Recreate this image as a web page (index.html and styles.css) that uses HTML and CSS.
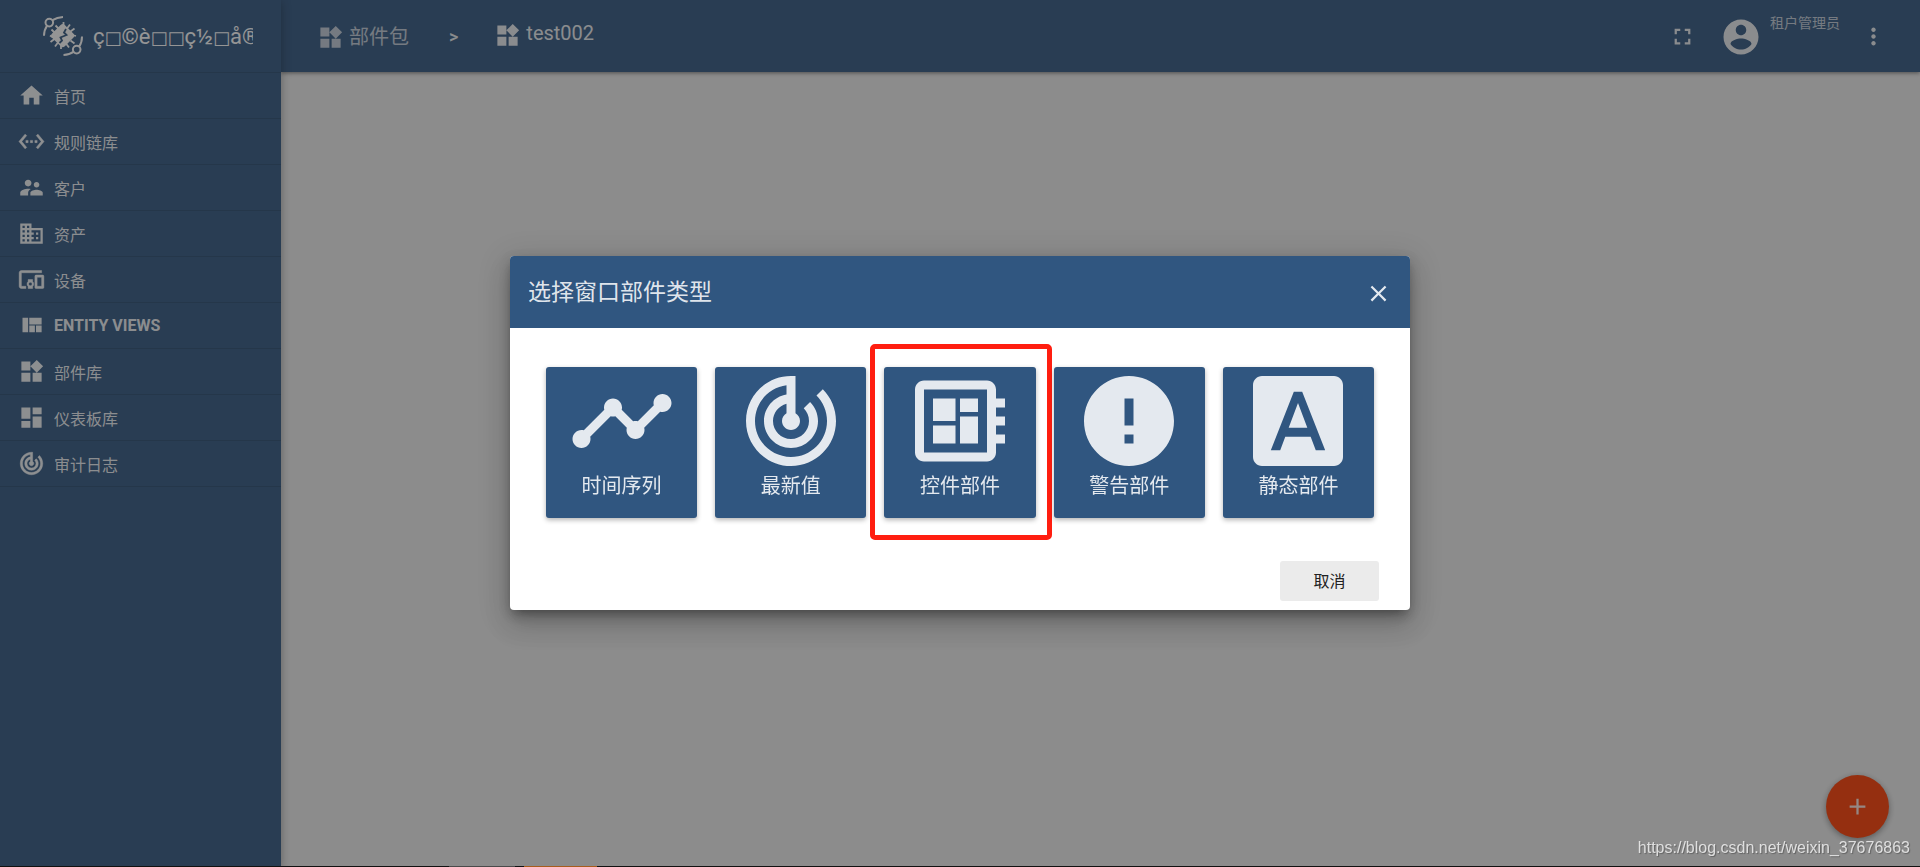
FILE: index.html
```html
<!DOCTYPE html>
<html lang="zh-CN">
<head>
<meta charset="utf-8">
<meta name="viewport" content="width=device-width, initial-scale=1">
<title>选择窗口部件类型</title>
<link rel="stylesheet" href="styles.css">
</head>
<body>
<svg class="sprite" aria-hidden="true">
  <symbol id="i-widgets" viewBox="0 0 24 24"><path d="M13 13v8h8v-8h-8zM3 21h8v-8H3v8zM3 3v8h8V3H3zm13.66-1.31L11 7.34 16.66 13l5.66-5.66-5.66-5.65z"/></symbol>
  <symbol id="i-track" viewBox="0 0 24 24"><path d="M19.07 4.93l-1.41 1.41C19.1 7.79 20 9.79 20 12c0 4.42-3.58 8-8 8s-8-3.58-8-8c0-4.08 3.05-7.44 7-7.93v2.02C8.16 6.57 6 9.03 6 12c0 3.31 2.69 6 6 6s6-2.69 6-6c0-1.66-.67-3.16-1.76-4.24l-1.41 1.41C15.55 9.9 16 10.9 16 12c0 2.21-1.79 4-4 4s-4-1.79-4-4c0-1.86 1.28-3.41 3-3.86v2.14c-.6.35-1 .98-1 1.72 0 1.1.9 2 2 2s2-.9 2-2c0-.74-.4-1.38-1-1.72V2h-1C6.48 2 2 6.48 2 12s4.48 10 10 10 10-4.48 10-10c0-2.76-1.12-5.26-2.93-7.07z"/></symbol>
</svg>

<div class="app">
  <aside class="sidebar">
    <div class="brand">
      <svg class="brand-mark" viewBox="0 0 40 40" aria-hidden="true">
        <g fill="none" stroke="currentColor" stroke-width="2">
          <circle cx="6.3" cy="6.6" r="3.8"/>
          <circle cx="33.7" cy="33.6" r="3.8"/>
          <path d="M9.5 4.2Q14 1.3 20 1M4 9.8Q1.2 13.5 1 19.7M30.5 35.9Q26.5 38.8 20.500 39M36.200 30.500Q39 26.500 39 20.500"/>
          <path d="M12.500 9.500l3 3M8.500 13.500l3 3M7 19.500l3 2M27 8.500l-3 4M31.500 12.500l-4 3M33 20l-4-1M31.500 27.500l-4-3M26 31.500l-3-4M18 33v-4M12 30.500l3-4M7.500 26l4-3M20.500 6v4" stroke-width="1.800"/>
        </g>
        <rect x="10.700" y="10.700" width="18" height="18" rx="3" transform="rotate(45 19.700 19.700)" fill="currentColor"/>
        <path d="M23 13l-2 3.500 2.500 2.500-6 2.500 1.500 3-2.500 2.500" fill="none" stroke="#305680" stroke-width="1.800"/>
      </svg>
      <span class="brand-name">ç<span class="tofu">□</span>©è<span class="tofu">□□</span>ç½<span class="tofu">□</span>å®</span>
    </div>
    <nav class="menu">
      <a class="menu-item" href="#"><svg class="icon" viewBox="0 0 24 24"><path d="M10 20v-6h4v6h5v-8h3L12 3 2 12h3v8z"/></svg>首页</a>
      <a class="menu-item" href="#"><svg class="icon icon-bold" viewBox="0 0 24 24"><path d="M7.77 6.76L6.23 5.48.82 12l5.41 6.52 1.54-1.28L3.42 12l4.35-5.24zM7 13h2v-2H7v2zm10-2h-2v2h2v-2zm-6 2h2v-2h-2v2zm6.77-7.520l-1.540 1.280L20.580 12l-4.350 5.240 1.540 1.280L23.180 12l-5.410-6.520z"/></svg>规则链库</a>
      <a class="menu-item" href="#"><svg class="icon" viewBox="0 0 24 24"><path d="M16.500 12c1.380 0 2.490-1.120 2.490-2.500S17.880 7 16.500 7C15.120 7 14 8.120 14 9.500s1.120 2.500 2.500 2.500zM9 11c1.660 0 2.990-1.340 2.990-3S10.660 5 9 5C7.340 5 6 6.340 6 8s1.340 3 3 3zm7.500 3c-1.830 0-5.500.920-5.500 2.750V19h11v-2.250c0-1.830-3.670-2.750-5.500-2.750zM9 13c-2.330 0-7 1.170-7 3.500V19h7v-2.250c0-.850.330-2.340 2.370-3.470C10.500 13.100 9.660 13 9 13z"/></svg>客户</a>
      <a class="menu-item" href="#"><svg class="icon" viewBox="0 0 24 24"><path d="M12 7V3H2v18h20V7H12zM6 19H4v-2h2v2zm0-4H4v-2h2v2zm0-4H4V9h2v2zm0-4H4V5h2v2zm4 12H8v-2h2v2zm0-4H8v-2h2v2zm0-4H8V9h2v2zm0-4H8V5h2v2zm10 12h-8v-2h2v-2h-2v-2h2v-2h-2V9h8v10zm-2-8h-2v2h2v-2zm0 4h-2v2h2v-2z"/></svg>资产</a>
      <a class="menu-item" href="#"><svg class="icon icon-bold" viewBox="0 0 24 24"><path d="M3 6h18V4H3c-1.100 0-2 .900-2 2v12c0 1.100.900 2 2 2h4v-2H3V6zm10 6H9v1.780c-.610.550-1 1.330-1 2.220s.390 1.670 1 2.220V20h4v-1.780c.610-.550 1-1.340 1-2.220s-.390-1.670-1-2.220V12zm-2 5.500c-.830 0-1.500-.670-1.500-1.500s.670-1.500 1.500-1.500 1.500.670 1.500 1.500-.670 1.500-1.500 1.500zM22 8h-6c-.500 0-1 .500-1 1v10c0 .500.500 1 1 1h6c.500 0 1-.500 1-1V9c0-.500-.500-1-1-1zm-1 10h-4v-8h4v8z"/></svg>设备</a>
      <a class="menu-item menu-item-strong" href="#"><svg class="icon" viewBox="0 0 24 24"><path d="M10 18h5v-6h-5v6zm-6 0h5V5H4v13zm12 0h5v-6h-5v6zM10 5v6h11V5H10z"/></svg>ENTITY VIEWS</a>
      <a class="menu-item" href="#"><svg class="icon"><use href="#i-widgets"/></svg>部件库</a>
      <a class="menu-item" href="#"><svg class="icon" viewBox="0 0 24 24"><path d="M3 13h8V3H3v10zm0 8h8v-6H3v6zm10 0h8V11h-8v10zm0-18v6h8V3h-8z"/></svg>仪表板库</a>
      <a class="menu-item" href="#"><svg class="icon icon-bold"><use href="#i-track"/></svg>审计日志</a>
    </nav>
  </aside>

  <div class="page">
    <header class="topbar">
      <nav class="crumbs">
        <a class="crumb crumb-parent" href="#"><svg class="icon"><use href="#i-widgets"/></svg><span class="crumb-text">部件包</span></a>
        <span class="crumb-sep">&gt;</span>
        <a class="crumb crumb-current" href="#"><svg class="icon"><use href="#i-widgets"/></svg><span class="crumb-text">test002</span></a>
      </nav>
      <div class="tools">
        <button class="icon-button" type="button" aria-label="全屏"><svg class="icon" viewBox="0 0 24 24"><path d="M7 14H5v5h5v-2H7v-3zm-2-4h2V7h3V5H5v5zm12 7h-3v2h5v-5h-2v3zM14 5v2h3v3h2V5h-5z"/></svg></button>
        <div class="user">
          <svg class="avatar" viewBox="0 0 24 24"><path d="M12 2C6.480 2 2 6.480 2 12s4.480 10 10 10 10-4.480 10-10S17.520 2 12 2zm0 3c1.660 0 3 1.340 3 3s-1.340 3-3 3-3-1.340-3-3 1.340-3 3-3zm0 14.200c-2.500 0-4.710-1.280-6-3.220.030-1.990 4-3.080 6-3.080 1.990 0 5.970 1.090 6 3.080-1.290 1.940-3.500 3.220-6 3.220z"/></svg>
          <span class="user-role">租户管理员</span>
        </div>
        <button class="icon-button" type="button" aria-label="更多"><svg class="icon" viewBox="0 0 24 24"><path d="M12 8c1.100 0 2-.900 2-2s-.900-2-2-2-2 .900-2 2 .900 2 2 2zm0 2c-1.100 0-2 .900-2 2s.900 2 2 2 2-.900 2-2-.900-2-2-2zm0 6c-1.100 0-2 .900-2 2s.900 2 2 2 2-.900 2-2-.900-2-2-2z"/></svg></button>
      </div>
    </header>
    <main class="content"></main>
  </div>
  <button class="fab" type="button" aria-label="添加"><svg class="icon" viewBox="0 0 24 24"><path d="M19 13h-6v6h-2v-6H5v-2h6V5h2v6h6v2z"/></svg></button>
</div>

<div class="backdrop">
  <section class="dialog" role="dialog" aria-modal="true" aria-labelledby="dialog-title">
    <header class="dialog-head">
      <h2 class="dialog-title" id="dialog-title">选择窗口部件类型</h2>
      <button class="icon-button" type="button" aria-label="关闭"><svg class="icon" viewBox="0 0 24 24"><path d="M19 6.410L17.590 5 12 10.590 6.410 5 5 6.410 10.590 12 5 17.590 6.410 19 12 13.410 17.590 19 19 17.590 13.410 12z"/></svg></button>
    </header>
    <div class="types">
      <button class="type" type="button"><svg class="type-icon" viewBox="0 0 24 24"><path d="M23 8c0 1.100-.900 2-2 2-.180 0-.350-.020-.510-.070l-3.560 3.550c.050.160.070.340.070.520 0 1.100-.900 2-2 2s-2-.900-2-2c0-.180.020-.360.070-.520l-2.550-2.550c-.160.050-.340.070-.520.070s-.360-.020-.520-.070l-4.550 4.560c.050.160.070.330.070.510 0 1.100-.900 2-2 2s-2-.900-2-2 .900-2 2-2c.180 0 .350.020.510.070l4.560-4.550C8.020 9.360 8 9.180 8 9c0-1.100.900-2 2-2s2 .900 2 2c0 .180-.020.360-.070.520l2.550 2.550c.160-.050.340-.070.520-.070s.360.020.520.070l3.550-3.560C19.020 8.350 19 8.180 19 8c0-1.100.900-2 2-2s2 .900 2 2z"/></svg>时间序列</button>
      <button class="type" type="button"><svg class="type-icon"><use href="#i-track"/></svg>最新值</button>
      <button class="type type-marked" type="button"><svg class="type-icon" viewBox="0 0 24 24"><path d="M22 9V7h-2V5c0-1.100-.900-2-2-2H4c-1.100 0-2 .900-2 2v14c0 1.100.900 2 2 2h14c1.100 0 2-.900 2-2v-2h2v-2h-2v-2h2v-2h-2V9h2zm-4 10H4V5h14v14zM6 13h5v4H6zm6-6h4v3h-4zM6 7h5v5H6zm6 4h4v6h-4z"/></svg>控件部件</button>
      <button class="type" type="button"><svg class="type-icon" viewBox="0 0 24 24"><path d="M12 2C6.480 2 2 6.480 2 12s4.480 10 10 10 10-4.480 10-10S17.520 2 12 2zm1 15h-2v-2h2v2zm0-4h-2V7h2v6z"/></svg>警告部件</button>
      <button class="type" type="button"><svg class="type-icon" viewBox="0 0 24 24"><path d="M9.930 13.500h4.140L12 7.980zM20 2H4c-1.100 0-2 .900-2 2v16c0 1.100.900 2 2 2h16c1.100 0 2-.900 2-2V4c0-1.100-.900-2-2-2zm-4.050 16.500l-1.140-3H9.170l-1.120 3H5.960l5.110-13h1.860l5.110 13h-2.090z"/></svg>静态部件</button>
    </div>
    <footer class="dialog-foot">
      <button class="cancel" type="button">取消</button>
    </footer>
  </section>
</div>

<div class="watermark">https://blog.csdn.net/weixin_37676863</div>
<div class="taskbar"><span class="task task-grey"></span><span class="task task-orange"></span></div>
</body>
</html>
```

FILE: styles.css
```css
* { box-sizing: border-box; }

body {
  margin: 0;
  overflow: hidden;
  font-family: Roboto, "Noto Sans CJK SC", sans-serif;
  font-size: 16px;
  color: #fff;
}

button {
  border: 0;
  padding: 0;
  background: none;
  color: inherit;
  font: inherit;
  cursor: pointer;
}

a {
  color: inherit;
  text-decoration: none;
}

svg { fill: currentColor; }

.sprite {
  position: absolute;
  width: 0;
  height: 0;
}

.icon {
  flex: none;
  display: block;
  width: 27px;
  height: 27px;
}

.icon-bold {
  stroke: currentColor;
  stroke-width: .4;
}

.app {
  display: grid;
  grid-template-columns: 281px 1fr;
  min-height: 100vh;
  background: #eee;
}

/* sidebar */
.sidebar {
  position: relative;
  z-index: 2;
  background: #305680;
  box-shadow: 0 2px 9px rgba(0, 0, 0, .35);
}

.brand {
  display: flex;
  align-items: center;
  gap: 10px;
  height: 72px;
  padding: 0 28px 0 43px;
}

.brand-mark {
  flex: none;
  width: 40px;
  height: 40px;
}

.brand-name {
  overflow: hidden;
  white-space: nowrap;
  padding-top: 2px;
  font-family: Roboto, "DejaVu Sans", sans-serif;
  font-size: 22px;
  line-height: 32px;
}

.tofu { font-size: 18px; }

.menu {
  display: flex;
  flex-direction: column;
  border-top: 1px solid rgba(0, 0, 0, .12);
}

.menu-item {
  display: flex;
  align-items: center;
  gap: 9px;
  height: 46px;
  padding: 0 18px;
  border-bottom: 1px solid rgba(0, 0, 0, .12);
  color: rgba(255, 255, 255, .93);
}

.menu-item-strong { font-weight: 700; }

/* top bar */
.page {
  display: flex;
  flex-direction: column;
}

.topbar {
  display: flex;
  justify-content: space-between;
  height: 72px;
  padding: 0 33px 0 36px;
  background: #305680;
  box-shadow: 0 1px 4px rgba(0, 0, 0, .5);
}

.crumbs,
.crumb,
.tools,
.user {
  display: flex;
  align-items: center;
}

.crumb {
  gap: 5px;
  font-size: 20px;
}

.crumb-text { padding-bottom: 4px; }

.crumb-parent {
  padding-top: 2px;
  opacity: .7;
}

.crumb-current {
  padding-bottom: 2px;
  opacity: .9;
}

.crumb-sep {
  padding: 0 36px 0 40px;
  font-size: 18px;
  font-weight: 500;
  opacity: .9;
}

.tools {
  gap: 20px;
  padding-top: 1px;
}

.tools .icon { opacity: .9; }

.user {
  align-self: stretch;
  gap: 8px;
  margin-left: 4px;
}

.avatar {
  width: 42px;
  height: 42px;
  opacity: .9;
}

.user-role {
  align-self: flex-start;
  padding-top: 12px;
  font-size: 14px;
  line-height: 20px;
  opacity: .7;
}

.content { flex: 1; }

.fab {
  position: fixed;
  right: 31px;
  bottom: 29px;
  display: grid;
  place-items: center;
  width: 63px;
  height: 63px;
  border-radius: 50%;
  background: #ff3d00;
  box-shadow: 0 2px 6px rgba(0, 0, 0, .4);
}

.fab .icon { opacity: .87; }

/* dialog */
.backdrop {
  position: fixed;
  inset: 0 0 1px;
  z-index: 10;
  display: grid;
  place-items: center;
  background: rgba(33, 33, 33, .48);
}

.dialog {
  width: 900px;
  max-width: 90vw;
  border-radius: 4px;
  overflow: hidden;
  background: #fff;
  box-shadow: 0 8px 10px -5px rgba(0, 0, 0, .2), 0 16px 24px 2px rgba(0, 0, 0, .14), 0 6px 30px 5px rgba(0, 0, 0, .12), 0 4px 12px rgba(0, 0, 0, .2);
}

.dialog-head {
  display: flex;
  align-items: center;
  justify-content: space-between;
  height: 72px;
  padding: 2px 18px 0;
  background: #305680;
  color: rgba(255, 255, 255, .87);
}

.dialog-title {
  margin: 0;
  padding-bottom: 6px;
  font-size: 23px;
  font-weight: 400;
}

.types {
  display: grid;
  grid-template-columns: repeat(5, 1fr);
  gap: 18px;
  padding: 39px 36px;
}

.type {
  position: relative;
  display: flex;
  flex-direction: column;
  align-items: center;
  height: 151px;
  border-radius: 3px;
  background: #305680;
  box-shadow: 0 2px 5px rgba(0, 0, 0, .3);
  color: rgba(255, 255, 255, .87);
  font-size: 20px;
  line-height: 22px;
}

.type-icon {
  flex: none;
  width: 108px;
  height: 108px;
}

.type-marked::after {
  content: "";
  position: absolute;
  inset: -23px -16px -22px -14px;
  border: 5px solid #ff1e10;
  border-radius: 5px;
}

.dialog-foot {
  display: flex;
  justify-content: flex-end;
  padding: 4px 31px 9px;
}

.cancel {
  min-width: 99px;
  height: 40px;
  padding-bottom: 2px;
  border-radius: 3px;
  background: #ebebeb;
  color: #212121;
}

/* page edge */
.watermark {
  position: fixed;
  right: 10px;
  bottom: 8px;
  z-index: 20;
  font-family: "Liberation Sans", sans-serif;
  font-size: 16px;
  line-height: 22px;
  color: rgba(255, 255, 255, .75);
  text-shadow: 1px 1px 1px rgba(0, 0, 0, .3);
}

.taskbar {
  position: fixed;
  inset: auto 0 0;
  z-index: 20;
  display: flex;
  gap: 9px;
  height: 1px;
  padding-left: 449px;
  background: #111;
}

.task { width: 66px; background: #4a4a4a; }

.task-orange { width: 73px; background: #a85c1c; }
```
